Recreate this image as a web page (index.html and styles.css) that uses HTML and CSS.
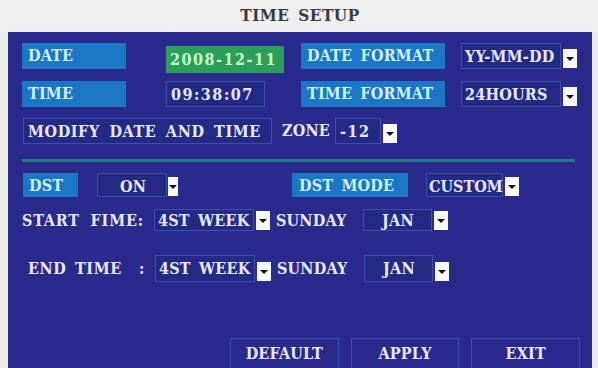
FILE: index.html
```html
<!DOCTYPE html>
<html>
<head>
<meta charset="utf-8">
<link rel="stylesheet" href="styles.css">
</head>
<body>
<div class="title">TIME SETUP</div>
<div class="panel">
  <div class="row r1">
    <div class="lbl w-date">DATE</div>
    <div class="green num">2008-12-11</div>
    <div class="lbl w-fmt">DATE FORMAT</div>
    <div class="val w-df">YY-MM-DD</div>
    <div class="arrow"></div>
  </div>
  <div class="row r2">
    <div class="lbl w-date">TIME</div>
    <div class="val w-time num">09:38:07</div>
    <div class="lbl w-fmt">TIME FORMAT</div>
    <div class="val w-df">24HOURS</div>
    <div class="arrow"></div>
  </div>
  <div class="row r3">
    <div class="val w-mod">MODIFY DATE AND TIME</div>
    <div class="txt zone">ZONE</div>
    <div class="val w-zone num">-12</div>
    <div class="arrow"></div>
  </div>
  <div class="sep"></div>
  <div class="row r4">
    <div class="lbl w-dst">DST</div>
    <div class="val w-on">ON</div>
    <div class="arrow a-on"></div>
    <div class="lbl w-mode">DST MODE</div>
    <div class="val w-custom">CUSTOM</div>
    <div class="arrow"></div>
  </div>
  <div class="row r5">
    <div class="txt w-start">START FIME:</div>
    <div class="val w-week">4ST WEEK</div>
    <div class="arrow"></div>
    <div class="txt w-sun">SUNDAY</div>
    <div class="val w-jan">JAN</div>
    <div class="arrow"></div>
  </div>
  <div class="row r6">
    <div class="txt w-end">END TIME&nbsp;&nbsp;:</div>
    <div class="val w-week">4ST WEEK</div>
    <div class="arrow"></div>
    <div class="txt w-sun">SUNDAY</div>
    <div class="val w-jan">JAN</div>
    <div class="arrow"></div>
  </div>
  <div class="row buttons">
    <div class="btn">DEFAULT</div>
    <div class="btn">APPLY</div>
    <div class="btn">EXIT</div>
  </div>
</div>
</body>
</html>
```

FILE: styles.css
```css
* { box-sizing: border-box; }
html, body {
  margin: 0;
  padding: 0;
  background: #ececec;
  width: 598px;
  height: 368px;
  overflow: hidden;
  font-family: "DejaVu Serif", "Liberation Serif", serif;
  font-stretch: condensed;
  font-weight: bold;
}
.title {
  height: 32px;
  line-height: 31px;
  text-align: center;
  font-size: 17px;
  letter-spacing: 0.5px;
  word-spacing: 3px;
  color: #3a3a3a;
  background: #efefef;
  padding-left: 2px;
}
.panel {
  margin-left: 8px;
  width: 584px;
  height: 336px;
  background: #2a2a8c;
  padding: 11px 0 0 14px;
  color: #e8e8ff;
  font-size: 16px;
  letter-spacing: 0.2px;
  word-spacing: 3px;
}
.num { letter-spacing: 1.5px; }
.row {
  display: flex;
  align-items: center;
  height: 26px;
  white-space: pre;
}
.r2 { margin-top: 12px; }
.r3 { margin-top: 11px; }
.r4 { margin-top: 0; height: 24px; }
.r5 { margin-top: 12px; height: 22px; }
.r6 { margin-top: 24px; height: 27px; }
.buttons { margin-top: 56px; height: 31px; padding-left: 208px; }

.lbl {
  background: #1b76c6;
  color: #ccf2ff;
  height: 100%;
  line-height: 26px;
  padding-left: 6px;
}
.val {
  height: 100%;
  line-height: 25px;
  border: 1px solid #3d4fae;
  background: #232a86;
  padding-left: 4px;
}
.txt {
  line-height: 26px;
}
.green {
  background: #2b9e5a;
  color: #c8ffc8;
  width: 118px;
  height: 27px;
  line-height: 27px;
  margin: 6px 0 0 40px;
  padding-left: 4px;
}
.arrow {
  width: 14px;
  height: 19px;
  margin-left: 2px;
  background: #f8f8f8;
  position: relative;
  align-self: flex-end;
  margin-bottom: 1px;
}
.arrow::after {
  content: "";
  position: absolute;
  left: 3px;
  top: 8px;
  border-left: 4px solid transparent;
  border-right: 4px solid transparent;
  border-top: 4px solid #111;
}
.a-on { width: 10px; margin-left: 1px; }
.a-on::after { left: 1px; }
.w-date { width: 104px; }
.w-fmt { width: 144px; }
.r1 .w-fmt { margin-left: 17px; }
.r2 .w-fmt { margin-left: 36px; }
.w-df { width: 100px; margin-left: 16px; padding-left: 3px; }
.w-time { width: 99px; margin-left: 40px; }
.w-mod { width: 249px; margin-left: 1px; padding-left: 4px; letter-spacing: 0.6px; word-spacing: 4px; }
.zone { margin-left: 10px; }
.w-zone { width: 46px; margin-left: 5px; }
.sep {
  height: 3px;
  width: 553px;
  background: #1f7a86;
  margin: 15px 0 11px 0;
}
.w-dst { width: 55px; margin-left: 1px; }
.w-on { width: 70px; margin-left: 19px; padding-left: 22px; }
.w-mode { width: 116px; margin-left: 114px; padding-left: 7px; }
.w-custom { width: 77px; margin-left: 18px; padding-left: 2px; letter-spacing: 0; }
.r5 .val, .r5 .txt { line-height: 21px; }
.w-start { width: 132px; padding-left: 0; letter-spacing: 0.8px; word-spacing: 5px; }
.w-week { width: 100px; padding-left: 3px; }
.w-sun { margin-left: 6px; width: 87px; }
.w-jan { width: 69px; padding-left: 18px; }
.w-end { width: 133px; padding-left: 6px; letter-spacing: 0.6px; }
.btn {
  height: 100%;
  width: 109px;
  border: 1px solid #3d4fae;
  text-align: center;
  line-height: 30px;
  margin-right: 12px;
}
```
